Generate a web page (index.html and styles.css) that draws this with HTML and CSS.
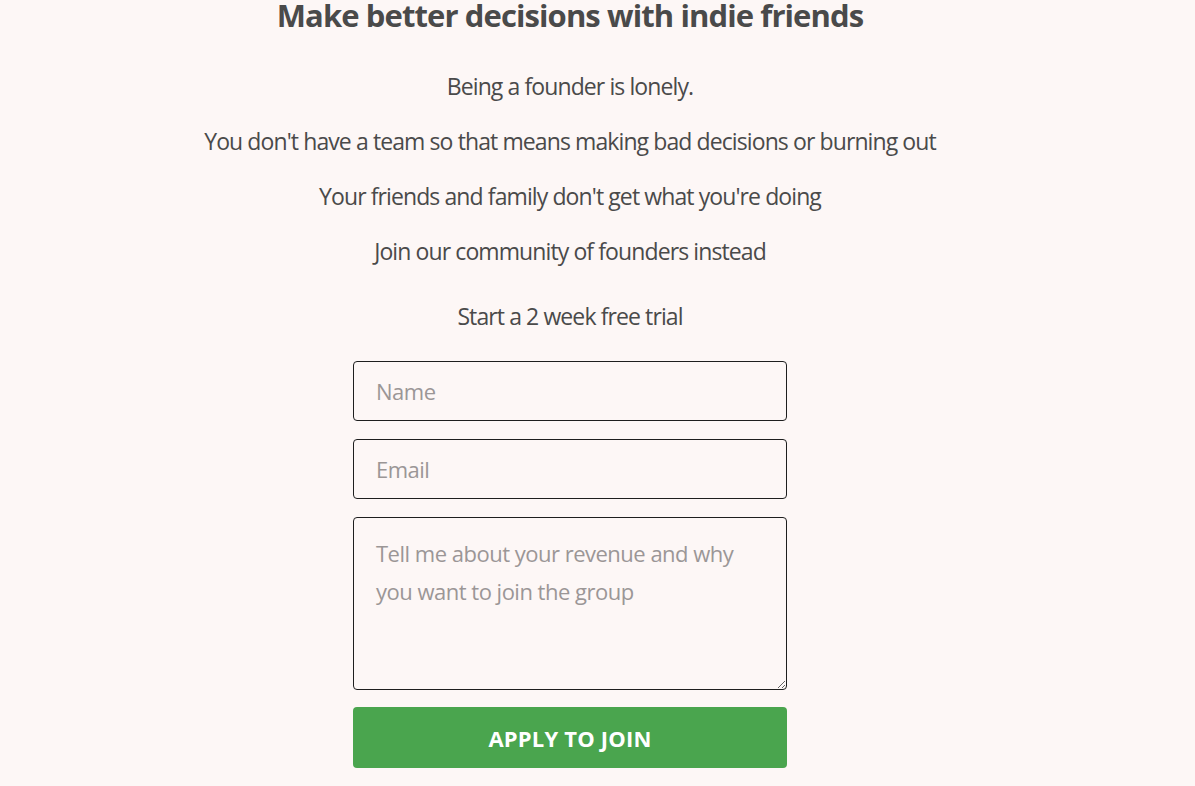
FILE: index.html
```html
<!DOCTYPE html>
<html lang="en">
<head>
<meta charset="UTF-8">
<meta name="viewport" content="width=device-width, initial-scale=1.0">
<title>Indie friends</title>
<link rel="stylesheet" href="styles.css">
</head>
<body>
  <main class="page">
    <h1 class="title">Make better decisions with indie friends</h1>
    <div class="pitch">
      <p>Being a founder is lonely.</p>
      <p>You don't have a team so that means making bad decisions or burning out</p>
      <p>Your friends and family don't get what you're doing</p>
      <p>Join our community of founders instead</p>
    </div>
    <p class="trial">Start a 2 week free trial</p>
    <form class="apply-form" onsubmit="event.preventDefault()">
      <input type="text" placeholder="Name">
      <input type="email" placeholder="Email">
      <textarea placeholder="Tell me about your revenue and why you want to join the group"></textarea>
      <button type="submit">Apply to join</button>
    </form>
  </main>
</body>
</html>
```

FILE: styles.css
```css
body {
  margin: 0;
  font-family: 'Open Sans', sans-serif;
  background-color: #fdf7f6;
  color: #4a4a4a;
}

.page {
  width: 1140px;
  display: flex;
  flex-direction: column;
  align-items: center;
}

.title {
  margin: 0;
  font-size: 31px;
  line-height: 30px;
  font-weight: 700;
  letter-spacing: -0.9px;
}

.pitch {
  margin-top: 41px;
  display: flex;
  flex-direction: column;
  align-items: center;
  gap: 25px;
}

.pitch p,
.trial {
  margin: 0;
  font-size: 23px;
  line-height: 30px;
  letter-spacing: -0.9px;
  text-align: center;
}

.trial {
  margin-top: 35px;
}

.apply-form {
  width: 434px;
  margin-top: 30px;
  display: flex;
  flex-direction: column;
  gap: 18px;
}

.apply-form input,
.apply-form textarea {
  box-sizing: border-box;
  width: 100%;
  padding: 0 22px;
  border: 1px solid #1e1e1e;
  border-radius: 4px;
  background: transparent;
  font-family: 'Open Sans', sans-serif;
  font-size: 22px;
  letter-spacing: -0.5px;
  color: #4a4a4a;
}

.apply-form input {
  height: 60px;
}

.apply-form textarea {
  height: 173px;
  padding-top: 16px;
  line-height: 38px;
  resize: vertical;
}

.apply-form ::placeholder {
  color: #9b9696;
}

.apply-form button {
  height: 61px;
  margin-top: -1px;
  border: none;
  border-radius: 4px;
  background-color: #4aa54e;
  color: #fff;
  font-family: 'Open Sans', sans-serif;
  font-size: 22px;
  font-weight: 700;
  letter-spacing: 0.2px;
  text-transform: uppercase;
  cursor: pointer;
}
```
